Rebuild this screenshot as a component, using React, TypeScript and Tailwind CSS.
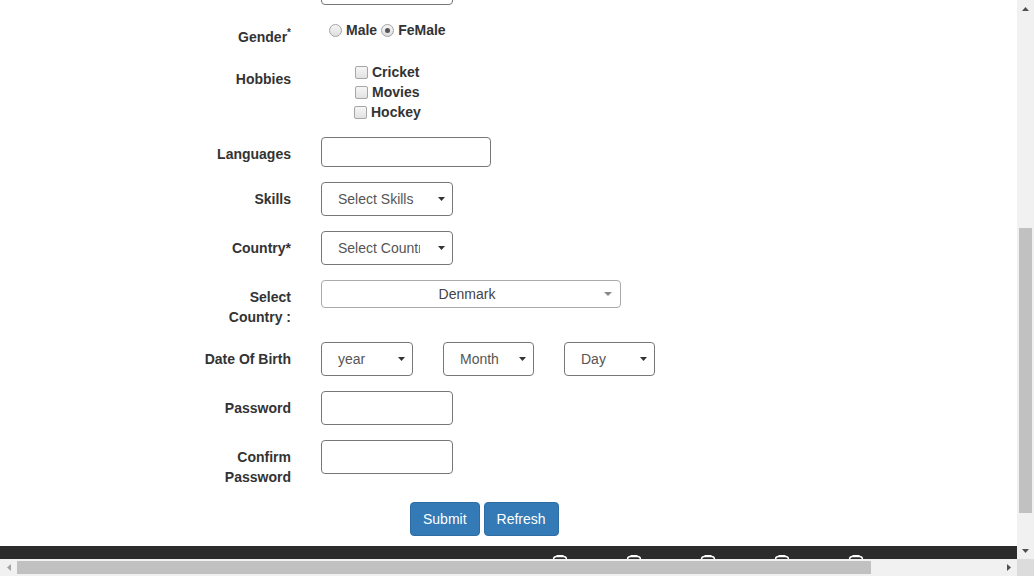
import type { ReactNode } from "react";

function Caret({ className = "fill-[#333]" }: { className?: string }) {
  return (
    <svg width="7" height="4" viewBox="0 0 7 4" className={className}>
      <polygon points="0,0 7,0 3.5,4" />
    </svg>
  );
}

function Row({ label, children }: { label?: ReactNode; children: ReactNode }) {
  return (
    <div className="mb-[15px] flex">
      <label className="ml-[195px] w-[96px] pt-[7px] text-right text-[14px] font-bold leading-5 text-[#333]">{label}</label>
      <div className="ml-[30px]">{children}</div>
    </div>
  );
}

function TextBox({ width = "w-[132px]", height = "h-[34px]" }: { width?: string; height?: string }) {
  return <div className={`${width} ${height} rounded-[4px] border border-[#777] bg-white`} />;
}

function FakeSelect({ text, width, textWidth }: { text: string; width: string; textWidth: string }) {
  return (
    <div className={`${width} flex h-[34px] items-center rounded-[4px] border border-[#777] bg-white pl-[16px] pr-[7px] text-[14px] text-[#555]`}>
      <span className={`${textWidth} overflow-hidden whitespace-nowrap`}>{text}</span>
      <span className="ml-auto flex">
        <Caret />
      </span>
    </div>
  );
}

function Radio({ checked }: { checked?: boolean }) {
  return (
    <span className="flex h-[13px] w-[13px] items-center justify-center rounded-full border border-[#a3a3a3] bg-gradient-to-b from-[#f6f6f6] to-[#dedede]">
      {checked ? <span className="h-[5px] w-[5px] rounded-full bg-[#555]" /> : null}
    </span>
  );
}

function Check() {
  return <span className="h-[13px] w-[13px] rounded-[2px] border border-[#a6a6a6] bg-gradient-to-b from-[#f6f6f6] to-[#e2e2e2]" />;
}

function FooterIcon() {
  return (
    <svg width="16" height="16" viewBox="0 0 16 16" className="mt-[9px] shrink-0" fill="none" stroke="#fff" strokeWidth="1.4">
      <rect x="1.5" y="1.5" width="13" height="12" rx="3" />
      <line x1="4.5" y1="1" x2="11.5" y2="1" strokeWidth="2" />
    </svg>
  );
}

export default function App() {
  const hobbies = [
    { name: "Cricket", offset: "ml-[34px]" },
    { name: "Movies", offset: "ml-[34px]" },
    { name: "Hockey", offset: "ml-[33px]" },
  ];

  return (
    <div className="flex h-[576px] w-[1034px] flex-col overflow-hidden bg-white font-['Liberation_Sans',Arial,sans-serif]">
      <div className="flex min-h-0 flex-1">
        <main className="flex min-w-0 flex-1 flex-col">
          <div className="min-h-0 flex-1 overflow-hidden">
            <form className="-mt-[29px]">
              <Row>
                <TextBox />
              </Row>

              <Row
                label={
                  <>
                    Gender<span className="align-top text-[10px] leading-3">*</span>
                  </>
                }
              >
                <div className="-mt-[0px] flex h-[20px] items-center text-[14px] font-bold text-[#333]">
                  <span className="ml-[8px]">
                    <Radio />
                  </span>
                  <span className="ml-[4px]">Male</span>
                  <span className="ml-[4px]">
                    <Radio checked />
                  </span>
                  <span className="ml-[4px]">FeMale</span>
                </div>
              </Row>

              <Row label="Hobbies">
                <div className="flex flex-col text-[14px] font-bold text-[#333]">
                  {hobbies.map((hobby) => (
                    <div key={hobby.name} className="flex h-[20px] items-center">
                      <span className={`${hobby.offset} flex`}>
                        <Check />
                      </span>
                      <span className="ml-[4px]">{hobby.name}</span>
                    </div>
                  ))}
                </div>
              </Row>

              <Row label="Languages">
                <TextBox width="w-[170px]" height="h-[30px]" />
              </Row>

              <Row label="Skills">
                <FakeSelect text="Select Skills" width="w-[132px]" textWidth="w-[82px]" />
              </Row>

              <Row label="Country*">
                <FakeSelect text="Select Country" width="w-[132px]" textWidth="w-[82px]" />
              </Row>

              <Row label="Select Country :">
                <div className="flex h-[28px] w-[300px] items-center rounded-[4px] border border-[#aaa] bg-white px-[8px] text-[14px] text-[#444]">
                  <span className="flex-1 text-center">Denmark</span>
                  <svg width="8" height="4" viewBox="0 0 8 4" className="fill-[#888]">
                    <polygon points="0,0 8,0 4,4" />
                  </svg>
                </div>
              </Row>

              <Row label="Date Of Birth">
                <div className="flex gap-[30px]">
                  <FakeSelect text="year" width="w-[92px]" textWidth="w-[50px]" />
                  <FakeSelect text="Month" width="w-[91px]" textWidth="w-[50px]" />
                  <FakeSelect text="Day" width="w-[91px]" textWidth="w-[50px]" />
                </div>
              </Row>

              <Row label="Password">
                <TextBox />
              </Row>

              <Row label="Confirm Password">
                <TextBox />
              </Row>

              <div className="ml-[410px] flex gap-[4px] text-[14px] leading-5 text-white">
                <button type="button" className="rounded-[4px] border border-[#2e6da4] bg-[#337ab7] px-[12px] py-[6px]">
                  Submit
                </button>
                <button type="button" className="rounded-[4px] border border-[#2e6da4] bg-[#337ab7] px-[12px] py-[6px]">
                  Refresh
                </button>
              </div>
            </form>
          </div>

          <footer className="flex h-[13px] gap-[58px] overflow-hidden bg-[#2c2c2c] pl-[552px]">
            <FooterIcon />
            <FooterIcon />
            <FooterIcon />
            <FooterIcon />
            <FooterIcon />
          </footer>
        </main>

        <div className="flex w-[17px] flex-col items-center bg-[#f1f1f1]">
          <div className="flex h-[17px] items-center justify-center">
            <svg width="7" height="4" viewBox="0 0 7 4" className="fill-[#505050]">
              <polygon points="0,4 7,4 3.5,0" />
            </svg>
          </div>
          <div className="mt-[211px] h-[285px] w-[13px] bg-[#c1c1c1]" />
          <div className="mt-auto flex h-[17px] items-center justify-center">
            <svg width="7" height="4" viewBox="0 0 7 4" className="fill-[#505050]">
              <polygon points="0,0 7,0 3.5,4" />
            </svg>
          </div>
        </div>
      </div>

      <div className="flex h-[17px]">
        <div className="flex flex-1 items-center bg-[#f1f1f1]">
          <div className="flex w-[17px] justify-center">
            <svg width="4" height="7" viewBox="0 0 4 7" className="fill-[#a3a3a3]">
              <polygon points="4,0 4,7 0,3.5" />
            </svg>
          </div>
          <div className="h-[13px] w-[854px] bg-[#c1c1c1]" />
          <div className="ml-auto flex w-[17px] justify-center">
            <svg width="4" height="7" viewBox="0 0 4 7" className="fill-[#505050]">
              <polygon points="0,0 0,7 4,3.5" />
            </svg>
          </div>
        </div>
        <div className="w-[17px] bg-[#dcdcdc]" />
      </div>
    </div>
  );
}
